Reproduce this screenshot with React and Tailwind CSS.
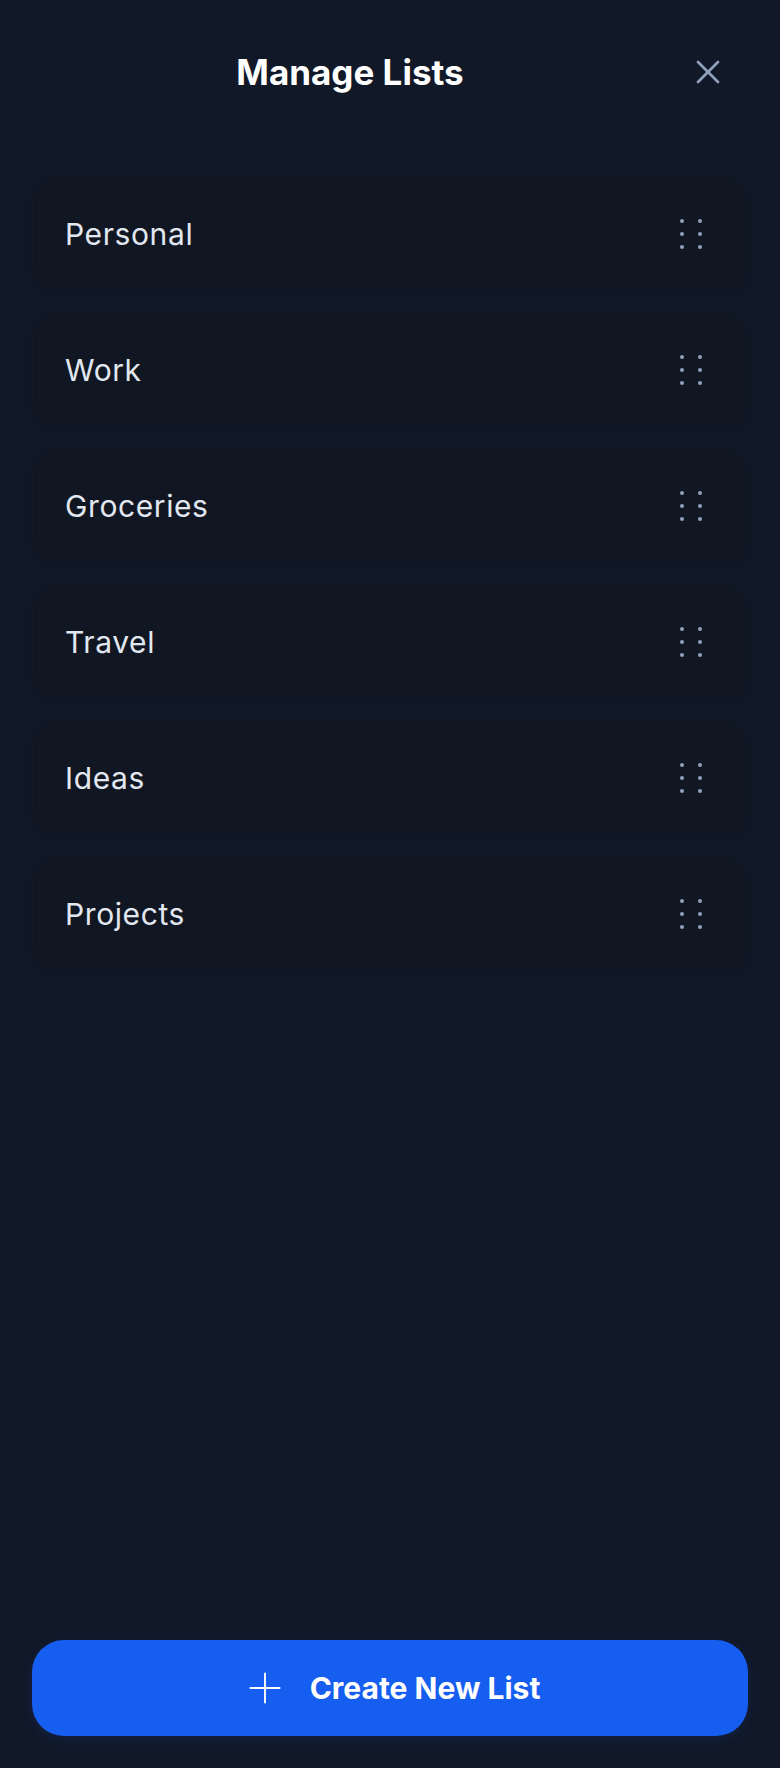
import { X, Plus } from 'lucide-react'

const LISTS = ['Personal', 'Work', 'Groceries', 'Travel', 'Ideas', 'Projects']

function DragDots() {
  return (
    <svg width="22" height="30" viewBox="0 0 22 30" className="text-slate-400">
      {[2, 15, 28].map(y => (
        <g key={y}>
          <circle cx="2" cy={y} r="2" fill="currentColor" />
          <circle cx="20" cy={y} r="2" fill="currentColor" />
        </g>
      ))}
    </svg>
  )
}

export default function App() {
  return (
    <div
      className="min-h-[1768px] bg-[#111827] flex flex-col px-8 pb-8"
      style={{ fontFamily: 'Inter, "Open Sans", sans-serif' }}
    >
      {/* Header */}
      <div className="h-36 flex items-center">
        <h1 className="flex-1 text-center text-white text-[35px] font-bold">
          Manage Lists
        </h1>
        <button className="w-20 h-20 flex items-center justify-center text-slate-400">
          <X size={40} strokeWidth={1.6} />
        </button>
      </div>

      {/* Lists */}
      <div className="pt-[34px] flex flex-col gap-6">
        {LISTS.map(name => (
          <div
            key={name}
            className="h-28 rounded-3xl bg-[#111722] border border-white/[0.015] shadow-[0_2px_8px_rgba(0,0,0,0.1)] flex items-center justify-between pl-8 pr-[45px]"
          >
            <span className="text-slate-200 text-[30px] font-normal tracking-[0.02em]">{name}</span>
            <DragDots />
          </div>
        ))}
      </div>

      <div className="flex-1" />

      {/* Create button */}
      <button className="h-24 rounded-[32px] bg-[#155eef] flex items-center justify-center gap-5 text-white shadow-[0_4px_14px_rgba(21,94,239,0.12)]">
        <Plus size={50} strokeWidth={0.9} />
        <span className="text-[30px] font-bold">Create New List</span>
      </button>
    </div>
  )
}
